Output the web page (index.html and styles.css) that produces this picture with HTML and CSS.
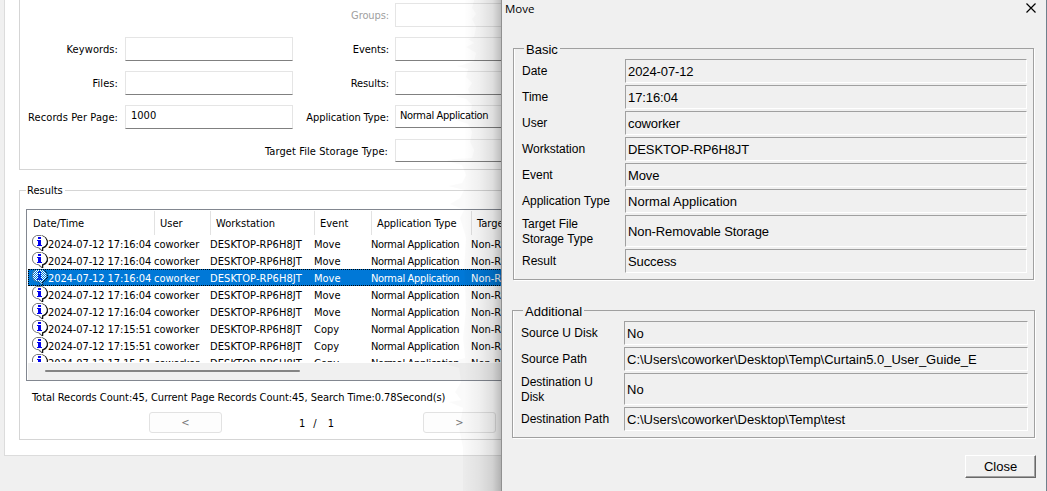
FILE: index.html
```html
<!DOCTYPE html>
<html lang="en">
<head>
    <meta charset="UTF-8">
    <meta name="viewport" content="width=device-width, initial-scale=1.0">
    <title>Audit Trail</title>
    <link rel="stylesheet" href="styles.css">
</head>
<body>
    <!-- icons shared by the result rows -->
    <svg class="defs" width="0" height="0">
        <symbol id="info" viewBox="0 0 16 16">
            <path d="M10 1l3.500 2 1.700 3v3l-1.700 2.500L10.500 13v2.500L7 13" fill="none" stroke="#111" stroke-width="1.500"/>
            <path d="M4.500.5h5L13 2.500l1.500 3v2.500L13 10.500l-3 1.800v3L6.500 12.500h-2l-3-2L.5 8V5l1-2.500z" fill="#fff"/>
            <path d="M9.500.5h-5l-3 2L.5 5v3l1 2.500 3 2h2l3 2.500" fill="none" stroke="#777"/>
            <path d="M6 2h3v2H6zM5 5h4v5h1v1H5v-1h1V6H5z" fill="#0000f0"/>
        </symbol>
        <pattern id="dither" width="2" height="2" patternUnits="userSpaceOnUse">
            <rect width="1" height="1" fill="#0078d7"/>
            <rect x="1" y="1" width="1" height="1" fill="#0078d7"/>
        </pattern>
    </svg>

    <div class="main-panel">
        <div class="search-form">
            <span></span><span></span>
            <label class="middle disabled">Groups:</label><div class="input disabled-input"></div>
            <label>Keywords:</label><div class="input"></div>
            <label class="middle">Events:</label><div class="input"></div>
            <label>Files:</label><div class="input"></div>
            <label class="middle">Results:</label><div class="input"></div>
            <label>Records Per Page:</label><div class="input">1000</div>
            <label class="middle">Application Type:</label><div class="input select">Normal Application</div>
            <span></span><span></span>
            <label>Target File Storage Type:</label><div class="input select"></div>
        </div>

        <fieldset class="results">
            <legend>Results</legend>
            <div class="table">
                <div class="row head">
                    <span>Date/Time</span><span>User</span><span>Workstation</span><span>Event</span><span class="type">Application Type</span><span>Target</span>
                </div>
                <div class="rows" id="rows"></div>
                <div class="scrollbar"><div class="thumb"></div></div>
            </div>
            <p class="total">Total Records Count:45, Current Page Records Count:45, Search Time:0.78Second(s)</p>
            <div class="pager">
                <button class="page-button">&lt;</button>
                <div class="pages"><span>1</span><span>/</span><span>1</span></div>
                <button class="page-button">&gt;</button>
            </div>
        </fieldset>
    </div>

    <svg class="shadow" width="62" height="491">
        <linearGradient id="fade">
            <stop offset="0" stop-color="#000" stop-opacity="0"/>
            <stop offset=".4" stop-color="#000" stop-opacity=".04"/>
            <stop offset=".75" stop-color="#000" stop-opacity=".11"/>
            <stop offset="1" stop-color="#000" stop-opacity=".26"/>
        </linearGradient>
        <path d="M34 0l-2 8 4 6-4 5 4 8-2 10-6 2 6 4-8 4 10 6-2 8-12 4-6 1 12 3-2 8 6 6-4 6 2 5-16 2 12 3 6 6-2 9-6 5-8 1 12 4 4 8-2 10 4 8-2 8-18 1-8 2 16 4 4 10-4 8-14 3 16 4-4 8-10 6 14 6-4 8 6 20-2 30 2 40-3 30 2 20-16 4-4 2 14 4 2 14-6 10 6 8-12 2 14 6-4 20 4 20v60h40V0z" fill="#000" fill-opacity=".02"/>
        <rect x="24" width="38" height="491" fill="url(#fade)"/>
    </svg>

    <div class="dialog">
        <div class="title-bar">
            <span class="title">Move</span>
            <svg width="10" height="10" viewBox="0 0 10 10"><path d="M.5.5l9 9M9.500.5l-9 9" stroke="#000" stroke-width="1.200"/></svg>
        </div>
        <fieldset class="group basic">
            <legend>Basic</legend>
            <label>Date</label><div class="field">2024-07-12</div>
            <label>Time</label><div class="field">17:16:04</div>
            <label>User</label><div class="field">coworker</div>
            <label>Workstation</label><div class="field">DESKTOP-RP6H8JT</div>
            <label>Event</label><div class="field">Move</div>
            <label>Application Type</label><div class="field app-field">Normal Application</div>
            <label>Target File<br>Storage Type</label><div class="field tall">Non-Removable Storage</div>
            <label>Result</label><div class="field">Success</div>
        </fieldset>
        <fieldset class="group additional">
            <legend>Additional</legend>
            <label>Source U Disk</label><div class="field">No</div>
            <label>Source Path</label><div class="field">C:\Users\coworker\Desktop\Temp\Curtain5.0_User_Guide_E</div>
            <label>Destination U<br>Disk</label><div class="field tall">No</div>
            <label>Destination Path</label><div class="field">C:\Users\coworker\Desktop\Temp\test</div>
        </fieldset>
        <button class="close-button">Close</button>
    </div>

    <script>
        const records = [
            ['2024-07-12 17:16:04', 'Move'],
            ['2024-07-12 17:16:04', 'Move'],
            ['2024-07-12 17:16:04', 'Move'],
            ['2024-07-12 17:16:04', 'Move'],
            ['2024-07-12 17:16:04', 'Move'],
            ['2024-07-12 17:15:51', 'Copy'],
            ['2024-07-12 17:15:51', 'Copy'],
            ['2024-07-12 17:15:51', 'Copy']
        ];
        const selected = 2;

        document.getElementById('rows').innerHTML = records.map(([time, event], i) => `
            <div class="row${i === selected ? ' selected' : ''}">
                <span class="time"><svg width="16" height="16"><use href="#info"/>${i === selected ? '<rect width="16" height="16" fill="url(#dither)"/>' : ''}</svg>${time}</span>
                <span>coworker</span><span class="station">DESKTOP-RP6H8JT</span><span>${event}</span><span class="app">Normal Application</span><span>Non-R</span>
            </div>`).join('');
    </script>
</body>
</html>
```
FILE: styles.css
```css
* {
    box-sizing: border-box;
}
body {
    margin: 0;
    height: 491px;
    overflow: hidden;
    background-color: #f0f0f0;
    font-family: "DejaVu Sans Condensed", "DejaVu Sans", sans-serif;
    font-size: 11px;
    color: #000;
}
fieldset {
    margin: 0;
    min-width: 0;
}
.defs {
    position: absolute;
}
.main-panel {
    width: 498px;
    height: 456px;
    margin-left: 4px;
    padding-left: 14px;
    background-color: #fff;
    border: 1px solid #dcdcdc;
    border-top: none;
    border-right: none;
    overflow: hidden;
}
.search-form {
    display: grid;
    grid-template-columns: 99px 168px 90px 107px;
    grid-auto-rows: 24px;
    gap: 10px 6px;
    height: 170px;
    padding-top: 3px;
    border: 1px solid #d5d5d5;
    border-top: none;
    border-right: none;
}
.search-form label {
    display: flex;
    align-items: center;
    justify-content: flex-end;
    padding-right: 1px;
    letter-spacing: 0.08px;
    white-space: nowrap;
}
.search-form .disabled {
    color: #a0a0a0;
}
.search-form .middle {
    padding-right: 0;
    letter-spacing: -0.1px;
}
.input {
    height: 24px;
    padding: 0 5px;
    line-height: 20px;
    border: 1px solid #e5e5e5;
    border-bottom-color: #808080;
}
.disabled-input {
    border-bottom-color: #e5e5e5;
}
.select {
    height: 23px;
    padding-left: 4px;
    letter-spacing: -0.33px;
}
.results {
    height: 257px;
    margin-top: 13px;
    padding: 12px 0 0 6px;
    border: 1px solid #d5d5d5;
    border-right: none;
}
.results legend {
    height: 14px;
    padding: 0 2px 0 1px;
    line-height: 15px;
}
.table {
    height: 172px;
    border: 1px solid #828790;
    border-right: none;
    overflow: hidden;
}
.row {
    display: grid;
    grid-template-columns: 126px 56px 104px 57px 100px 1fr;
    height: 17px;
    padding-left: 1px;
    line-height: 19px;
    white-space: nowrap;
}
.head {
    height: 25px;
}
.head span {
    height: 24px;
    margin-top: 1px;
    padding-left: 5px;
    line-height: 25px;
}
.head .type {
    letter-spacing: -0.1px;
}
.head span + span {
    border-left: 1px solid #e2e2e2;
}
.rows {
    height: 127px;
    overflow: hidden;
}
.time {
    display: flex;
    padding-left: 4px;
    letter-spacing: -0.1px;
}
.station {
    letter-spacing: 0.08px;
}
.app {
    letter-spacing: -0.33px;
}
.selected {
    margin-left: 1px;
    padding-left: 0;
    background-color: #0078d7;
    color: #fff;
    outline: 1px dotted #000;
    outline-offset: -1px;
}
.scrollbar {
    height: 17px;
    margin: 1px 1px 0;
    padding: 7px 0 0 17px;
    background-color: #f0f0f0;
}
.thumb {
    width: 255px;
    height: 2px;
    border-radius: 1px;
    background-color: #858585;
}
.total {
    margin: 10px 0 0 6px;
    line-height: 14px;
    letter-spacing: -0.05px;
}
.pager {
    display: flex;
    margin: 7px 0 0 123px;
}
.page-button {
    width: 73px;
    height: 21px;
    padding: 0;
    background-color: #fdfdfd;
    border: 1px solid #e2e2e2;
    border-radius: 3px;
    font: inherit;
    color: #777;
}
.pages {
    display: flex;
    gap: 8px;
    width: 201px;
    padding-left: 77px;
    line-height: 24px;
}
.pages span:last-child {
    padding-left: 3px;
}
.shadow {
    position: absolute;
    left: 440px;
    top: 0;
}
.dialog {
    position: absolute;
    left: 501px;
    top: 0;
    width: 546px;
    height: 491px;
    background-color: #f0f0f0;
    border-left: 1px solid #909090;
    border-right: 1px solid #6f808c;
    font-family: "Liberation Sans", Arial, sans-serif;
    font-size: 12px;
}
.title-bar {
    display: flex;
    justify-content: space-between;
    height: 41px;
    padding: 3px 10px 0 3px;
    font-family: "Open Sans", sans-serif;
    font-size: 11.5px;
    line-height: 11px;
}
.group {
    display: grid;
    grid-template-columns: 103px 1fr;
    row-gap: 2px;
    align-content: start;
    border: 1px solid #a0a0a0;
    box-shadow: 1px 1px #fff, inset 1px 0 #fff;
}
.group legend {
    height: 15px;
    margin-left: 2px;
    padding: 0 2px;
    font-size: 13px;
    line-height: 17px;
}
.group label {
    align-self: center;
    padding-top: 1px;
    line-height: 15px;
    white-space: nowrap;
}
.basic {
    width: 521px;
    height: 239px;
    margin-left: 11px;
    padding: 3px 6px 0 8px;
}
.additional {
    width: 523px;
    height: 135px;
    margin: 23px 0 0 10px;
    padding: 3px 6px 0 8px;
}
.field {
    height: 24px;
    padding-left: 2px;
    border: 1px solid;
    border-color: #a0a0a0 #fff #fff #a0a0a0;
    font-size: 13px;
    line-height: 24px;
    white-space: nowrap;
}
.basic .field {
    letter-spacing: -0.1px;
}
.basic .app-field {
    letter-spacing: 0.04px;
}
.group .tall {
    height: 32px;
    line-height: 31px;
}
.close-button {
    display: block;
    width: 71px;
    height: 23px;
    margin: 17px 0 0 463px;
    padding: 0 0 1px;
    background-color: #f0f0f0;
    border: 1px solid;
    border-color: #fff #696969 #696969 #fff;
    box-shadow: inset -1px -1px #a0a0a0;
    font-family: inherit;
    font-size: 13px;
}
```
